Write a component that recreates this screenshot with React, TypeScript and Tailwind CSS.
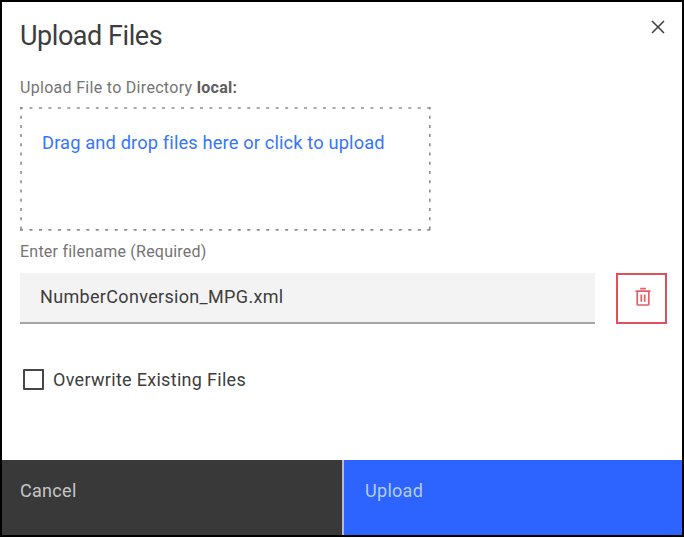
import React from "react";

function CloseIcon() {
  return (
    <svg className="block h-[14px] w-[14px]" viewBox="0 0 14 14" fill="none" stroke="#3d3d3d" strokeWidth="1.5">
      <path d="M1 1 13 13M13 1 1 13" />
    </svg>
  );
}

function TrashIcon() {
  return (
    <svg className="block h-[20px] w-[16px]" viewBox="0 0 16 20" fill="none" stroke="#e0606a" strokeWidth="1.7">
      <path d="M0.5 4.2H15.5M5.2 1.6H10.8M2.2 4.4V17.2Q2.2 18 3 18H13Q13.8 18 13.8 17.2V4.4M6.3 7.5V14.7M9.7 7.5V14.7" />
    </svg>
  );
}

function DropZone() {
  return (
    <div className="relative mt-[9px] h-[124px] w-[411px] pt-[24px] pl-[22px]">
      <svg className="absolute inset-0 h-full w-full" viewBox="0 0 411 124" fill="none" stroke="#8c8c8c" strokeWidth="1.6">
        <path d="M0 1H411M0 122.9H411" strokeDasharray="3 6.47" />
        <path d="M1 0V124M409.8 0V124" strokeDasharray="3 6.24" strokeDashoffset="0.6" />
      </svg>
      <button className="block text-left text-[18.3px] leading-[24px] tracking-[0.13px] whitespace-nowrap text-[#3676fc]">
        Drag and drop files here or click to upload
      </button>
    </div>
  );
}

export default function App() {
  return (
    <div className="h-[538px] w-[684px] bg-white font-['Roboto','Liberation_Sans',sans-serif]">
      <main className="flex h-[537px] w-[684px] flex-col border-2 border-black bg-white text-[#3d3d3d]">
        <header className="flex justify-between pr-[17px] pl-[18px]">
          <h1 className="mt-[16px] text-[27px] leading-[36px] tracking-[-0.45px]">Upload Files</h1>
          <button className="mt-[18px] h-[14px]" aria-label="Close">
            <CloseIcon />
          </button>
        </header>
        <section className="flex flex-1 flex-col pr-[15px] pl-[18px]">
          <p className="mt-[24px] text-[16px] leading-[20px] tracking-[0.3px] text-[#747474]">
            <span>Upload File to Directory </span>
            <b className="font-bold text-[#5e5e5e]">local:</b>
          </p>
          <DropZone />
          <label className="mt-[11px] text-[16px] leading-[20px] tracking-[0.23px] text-[#747474]">
            <span>Enter filename (Required)</span>
          </label>
          <div className="mt-[11px] flex justify-between">
            <div className="h-[51px] w-[575px] border-b-2 border-[#a6a6a6] bg-[#f3f3f3] pt-[12px] pl-[20px] text-[18px] leading-[24px] tracking-[0.33px]">
              <span>NumberConversion_MPG.xml</span>
            </div>
            <button className="flex h-[51px] w-[51px] items-start justify-center border-2 border-[#e0505a] pt-[12px] pl-[2px]" aria-label="Delete">
              <TrashIcon />
            </button>
          </div>
          <label className="mt-[44px] flex items-center pl-[3px] text-[18px] leading-[24px] tracking-[0.3px]">
            <span className="mr-[9px] mb-[2px] h-[21px] w-[21px] rounded-[1px] border-2 border-[#464646]" />
            <span>Overwrite Existing Files</span>
          </label>
        </section>
        <footer className="flex h-[75px] text-[18px] leading-[24px] tracking-[0.3px]">
          <button className="flex w-[340px] bg-[#393939] pt-[19px] pl-[18px] text-[#c6c6c6]">
            <span>Cancel</span>
          </button>
          <button className="flex flex-1 border-l-2 border-[#b9bcc8] bg-[#2d63ff] pt-[19px] pl-[21px] text-[#b5ccff]">
            <span>Upload</span>
          </button>
        </footer>
      </main>
    </div>
  );
}
